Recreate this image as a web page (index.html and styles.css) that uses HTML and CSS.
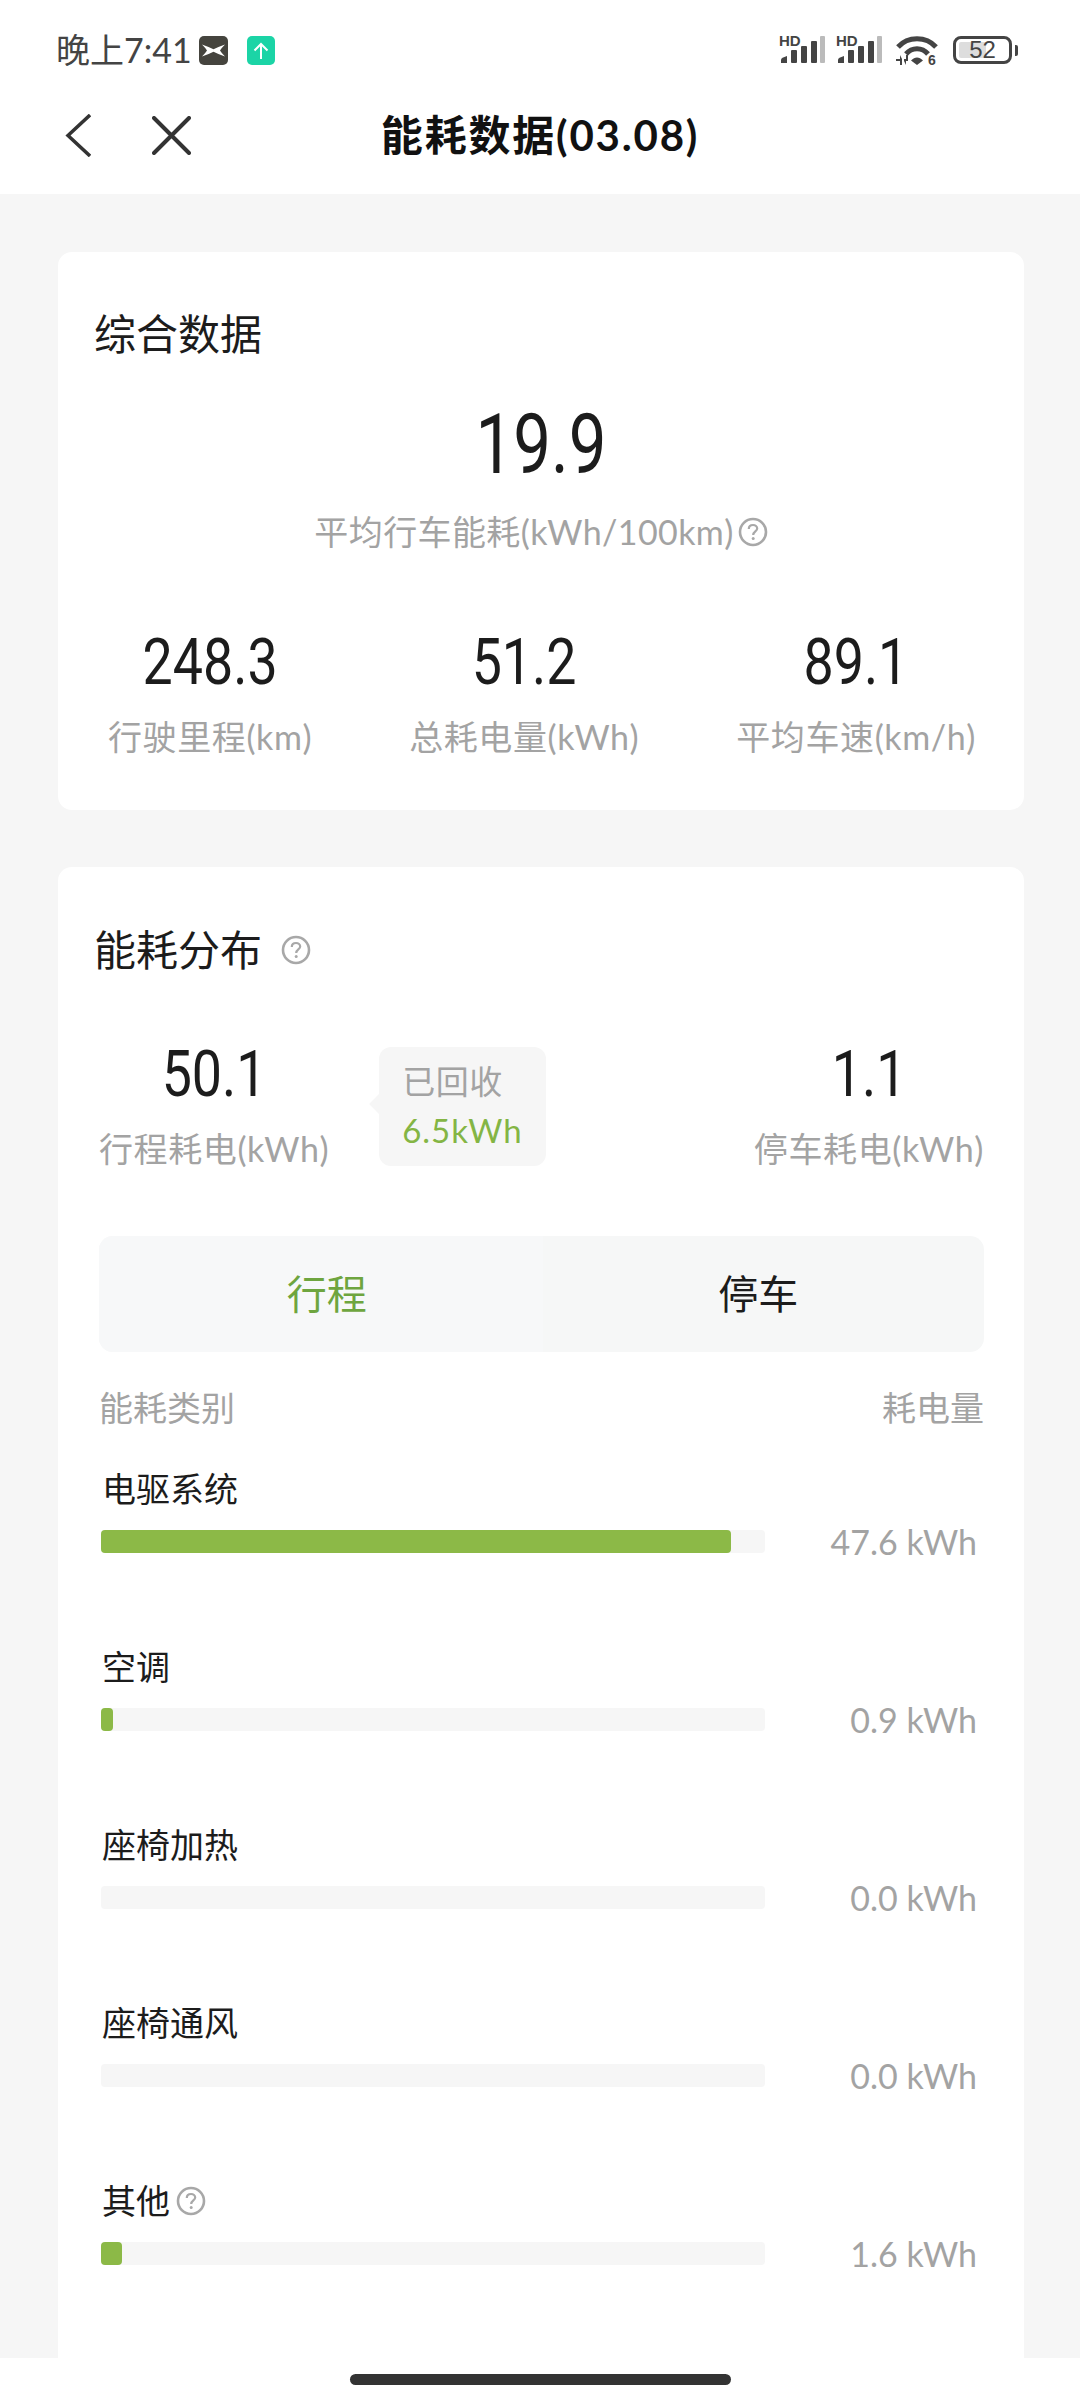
FILE: index.html
```html
<html>
	<head>
		<meta charset="utf-8">
		<title>能耗数据</title>
		<link rel="stylesheet" href="styles.css">
	</head>
	<body>
		<div class="page">
			<div class="header">
				<div class="status-bar">
					<div class="status-left">
						<span class="status-time">晚上7:41</span>
						<svg class="app-icon" viewBox="0 0 29 29">
							<rect width="29" height="29" rx="5" fill="#45443e"/>
							<path d="M3 8.5Q10 11 14.5 13.3Q19 11 26 8.5Q22.5 12 21 14.5Q22.5 17 26 20.5Q19 18 14.5 15.7Q10 18 3 20.5Q6.5 17 8 14.5Q6.5 12 3 8.5Z" fill="#fff"/>
						</svg>
						<svg class="app-icon second" viewBox="0 0 28 29">
							<rect width="28" height="29" rx="5" fill="#1bd4a6"/>
							<path d="M14 23V8M7.5 14.5L14 8L20.5 14.5" fill="none" stroke="#fff" stroke-width="2"/>
						</svg>
					</div>
					<div class="status-right">
						<div class="signal">
							<span class="signal-hd">HD</span>
							<svg viewBox="0 0 46 30" width="46" height="30"><use href="#bars"/></svg>
						</div>
						<div class="signal">
							<span class="signal-hd">HD</span>
							<svg viewBox="0 0 46 30" width="46" height="30"><use href="#bars"/></svg>
						</div>
						<svg class="wifi" viewBox="0 -4 44 40" width="44" height="40">
							<path d="M3 13C13 2 31 2 41 13" fill="none" stroke="#444" stroke-width="5"/>
							<path d="M11 20C17 13 27 13 33 20" fill="none" stroke="#444" stroke-width="5"/>
							<path d="M16 26.5C20 22.5 24 22.5 28 26.5L22 31Z" fill="#444"/>
							<path d="M1 25H5V21L7 25V31H5V27H1Z M9 25H11V21H13V27H11V31L9 27Z" fill="#444"/>
							<text x="33" y="31" class="wifi-six">6</text>
						</svg>
						<div class="battery">
							<div class="battery-body">
								<div class="battery-level"></div>
								<span class="battery-text">52</span>
							</div>
							<div class="battery-tip"></div>
						</div>
					</div>
				</div>
				<div class="nav-bar">
					<div class="nav-icons">
						<svg width="26" height="43" viewBox="0 0 26 43"><path d="M25 1L3 21.5L25 42" fill="none" stroke="#333" stroke-width="3.5"/></svg>
						<svg class="nav-close" width="39" height="39" viewBox="0 0 39 39"><path d="M2 2L37 37M37 2L2 37" fill="none" stroke="#333" stroke-width="4" stroke-linecap="round"/></svg>
					</div>
					<div class="nav-title">能耗数据(03.08)</div>
				</div>
			</div>

			<div class="content">
				<div class="card summary-card">
					<div class="card-title">综合数据</div>
					<div class="big-number">19.9</div>
					<div class="avg-label">
						<span>平均行车能耗(kWh/100km)</span>
						<svg class="help-icon" viewBox="0 0 30 30"><use href="#help"/></svg>
					</div>
					<div class="stats">
						<div class="stat">
							<div class="number">248.3</div>
							<div class="grey-label">行驶里程(km)</div>
						</div>
						<div class="stat">
							<div class="number">51.2</div>
							<div class="grey-label">总耗电量(kWh)</div>
						</div>
						<div class="stat">
							<div class="number">89.1</div>
							<div class="grey-label">平均车速(km/h)</div>
						</div>
					</div>
				</div>

				<div class="card dist-card">
					<div class="card-title title-row">
						<span>能耗分布</span>
						<svg class="help-icon" viewBox="0 0 30 30"><use href="#help"/></svg>
					</div>
					<div class="dist-body">
						<div class="use-row">
							<div class="stat">
								<div class="number">50.1</div>
								<div class="grey-label">行程耗电(kWh)</div>
							</div>
							<div class="recovered">
								<div class="recovered-label">已回收</div>
								<div class="recovered-value">6.5kWh</div>
							</div>
							<div class="stat stat-right">
								<div class="number">1.1</div>
								<div class="grey-label">停车耗电(kWh)</div>
							</div>
						</div>
						<div class="tabs">
							<div class="tab tab-active">行程</div>
							<div class="tab tab-other">停车</div>
						</div>
						<div class="list-head">
							<span>能耗类别</span>
							<span>耗电量</span>
						</div>
						<div class="usage-list">
							<div class="usage">
								<div class="usage-name">电驱系统</div>
								<div class="usage-line">
									<div class="bar"><div class="bar-fill" style="width: 630px"></div></div>
									<div class="usage-value">47.6 kWh</div>
								</div>
							</div>
							<div class="usage">
								<div class="usage-name">空调</div>
								<div class="usage-line">
									<div class="bar"><div class="bar-fill" style="width: 12px"></div></div>
									<div class="usage-value">0.9 kWh</div>
								</div>
							</div>
							<div class="usage">
								<div class="usage-name">座椅加热</div>
								<div class="usage-line">
									<div class="bar"></div>
									<div class="usage-value">0.0 kWh</div>
								</div>
							</div>
							<div class="usage">
								<div class="usage-name">座椅通风</div>
								<div class="usage-line">
									<div class="bar"></div>
									<div class="usage-value">0.0 kWh</div>
								</div>
							</div>
							<div class="usage">
								<div class="usage-name name-help">
									<span>其他</span>
									<svg class="help-icon" viewBox="0 0 30 30"><use href="#help"/></svg>
								</div>
								<div class="usage-line">
									<div class="bar"><div class="bar-fill" style="width: 21px"></div></div>
									<div class="usage-value">1.6 kWh</div>
								</div>
							</div>
						</div>
					</div>
				</div>
			</div>

			<div class="home-area">
				<div class="home-bar"></div>
			</div>
		</div>

		<svg width="0" height="0" class="defs">
			<symbol id="help" viewBox="0 0 30 30">
				<circle cx="15" cy="15" r="13" fill="none" stroke="#a8a8a8" stroke-width="2.6"/>
				<path d="M10.8 12C10.8 9.4 12.7 8 15 8C17.4 8 19.2 9.5 19.2 11.6C19.2 14.4 15.2 14.6 15.2 18" fill="none" stroke="#a8a8a8" stroke-width="2.2"/>
				<circle cx="15.2" cy="21.6" r="1.5" fill="#a8a8a8"/>
			</symbol>
			<symbol id="bars" viewBox="0 0 46 30">
				<path d="M2 28V25Q2 23.5 3.5 22.8L8 21V28Z" fill="#444"/>
				<rect x="12" y="15" width="6" height="13" rx="1" fill="#444"/>
				<rect x="22" y="11" width="6" height="17" rx="1" fill="#444"/>
				<rect x="32" y="6" width="6" height="22" rx="1" fill="#444"/>
				<rect x="41" y="1" width="5" height="27" rx="1" fill="#bbb"/>
			</symbol>
		</svg>
	</body>
</html>
```

FILE: styles.css
```css
* {
	box-sizing: border-box;
}

body {
	margin: 0;
	font-family: Lato, "Noto Sans CJK SC", sans-serif;
	color: #1c1c1c;
	background-color: #fff;
}

.defs {
	position: absolute;
}

.page {
	width: 1080px;
	height: 2400px;
	display: flex;
	flex-direction: column;
	overflow: hidden;
}

/* top part */

.header {
	height: 194px;
	background-color: #fff;
}

.status-bar {
	display: flex;
	justify-content: space-between;
	align-items: center;
	height: 40px;
	margin-top: 30px;
	padding: 0 62px 0 56px;
}

.status-left {
	display: flex;
	align-items: center;
}

.status-time {
	font-size: 34px;
	line-height: 40px;
	color: #444;
	width: 143px;
}

.app-icon {
	width: 29px;
	height: 29px;
}

.app-icon.second {
	width: 28px;
	margin-left: 19px;
}

.status-right {
	display: flex;
	align-items: center;
}

.signal {
	position: relative;
	width: 46px;
	height: 30px;
	margin-right: 11px;
}

.signal-hd {
	position: absolute;
	top: -2px;
	left: 0;
	font-family: "Liberation Sans", sans-serif;
	font-size: 15px;
	line-height: 15px;
	font-weight: bold;
	color: #444;
}

.wifi {
	margin: 0 14px 0 2px;
}

.wifi-six {
	font-family: "Liberation Sans", sans-serif;
	font-size: 14px;
	font-weight: bold;
	fill: #444;
}

.battery {
	display: flex;
	align-items: center;
	gap: 3px;
}

.battery-body {
	position: relative;
	display: flex;
	align-items: center;
	justify-content: center;
	width: 59px;
	height: 28px;
	border: 3px solid #444;
	border-radius: 8px;
}

.battery-level {
	position: absolute;
	left: 3px;
	top: 3px;
	bottom: 3px;
	width: 27px;
	background-color: #ddd;
	border-radius: 2px;
}

.battery-text {
	position: relative;
	font-family: "Liberation Sans", sans-serif;
	font-size: 24px;
	line-height: 22px;
	color: #444;
}

.battery-tip {
	width: 3px;
	height: 11px;
	background-color: #444;
	border-radius: 0 2px 2px 0;
}

.nav-bar {
	display: grid;
	grid-template-columns: 1fr auto 1fr;
	align-items: center;
	height: 54px;
	margin-top: 38px;
}

.nav-icons {
	display: flex;
	align-items: center;
	padding-left: 65px;
}

.nav-close {
	margin-left: 61px;
}

.nav-title {
	font-size: 42px;
	line-height: 54px;
	font-weight: bold;
	color: #111;
	letter-spacing: 1.8px;
}

/* cards */

.content {
	flex: 1;
	min-height: 0;
	overflow: hidden;
	display: flex;
	flex-direction: column;
	gap: 57px;
	padding: 58px 56px 0 58px;
	background-color: #f6f6f6;
}

.card {
	flex-shrink: 0;
	background-color: #fff;
	border-radius: 14px;
	padding: 54px 37px 51px;
}

.dist-card {
	padding-top: 55px;
	height: 1560px;
}

.card-title {
	font-size: 42px;
	line-height: 56px;
	margin-left: -1px;
}

.title-row {
	display: flex;
	align-items: center;
	gap: 19px;
}

.help-icon {
	width: 30px;
	height: 30px;
	flex-shrink: 0;
}

.big-number {
	margin-top: 38px;
	font-family: Roboto, sans-serif;
	font-size: 84px;
	line-height: 90px;
	text-align: center;
	transform: scaleX(0.8);
}

.avg-label {
	display: flex;
	justify-content: center;
	align-items: center;
	gap: 4px;
	margin-top: 20px;
	font-size: 34px;
	line-height: 44px;
	letter-spacing: 0.4px;
	color: #a3a3a3;
}

.stats {
	display: flex;
	justify-content: space-between;
	margin-top: 74px;
	padding: 0 11px 0 13px;
}

.stat {
	text-align: center;
}

.number {
	font-family: Roboto, sans-serif;
	font-size: 64px;
	line-height: 70px;
	transform: scaleX(0.84);
}

.grey-label {
	margin-top: 17px;
	font-size: 34px;
	line-height: 44px;
	letter-spacing: 0.6px;
	color: #a3a3a3;
}

.dist-body {
	padding: 0 3px 0 4px;
}

.use-row {
	display: flex;
	align-items: flex-start;
	margin-top: 62px;
}

.stat-right {
	margin-left: auto;
}

.recovered {
	position: relative;
	width: 167px;
	height: 119px;
	margin: 7px 0 0 50px;
	padding: 12px 0 0 23px;
	background-color: #f6f6f6;
	border-radius: 12px;
}

.recovered::before {
	content: "";
	position: absolute;
	left: -7px;
	top: 50px;
	width: 14px;
	height: 14px;
	background-color: #f6f6f6;
	transform: rotate(45deg);
}

.recovered-label {
	font-size: 33px;
	line-height: 44px;
	letter-spacing: 0.5px;
	color: #a3a3a3;
}

.recovered-value {
	margin-top: 5px;
	font-size: 33px;
	line-height: 44px;
	letter-spacing: 1px;
	color: #84b544;
}

.tabs {
	display: flex;
	height: 116px;
	margin-top: 65px;
	background-color: #f6f7f7;
	border-radius: 14px;
	overflow: hidden;
}

.tab {
	display: flex;
	align-items: center;
	justify-content: center;
	flex: 1;
	font-size: 40px;
	padding-bottom: 5px;
}

.tab-active {
	color: #6ea53f;
	background-color: #f7f8f9;
	padding-left: 12px;
}

.tab-other {
	padding-right: 10px;
}

.list-head {
	display: flex;
	justify-content: space-between;
	margin-top: 34px;
	font-size: 34px;
	line-height: 44px;
	color: #a3a3a3;
}

.usage-list {
	display: flex;
	flex-direction: column;
	gap: 92px;
	margin-top: 37px;
}

.usage-name {
	padding-left: 3px;
	font-size: 34px;
	line-height: 44px;
}

.name-help {
	display: flex;
	align-items: center;
	gap: 6px;
}

.usage-line {
	display: flex;
	align-items: center;
	height: 23px;
	margin-top: 19px;
	padding-left: 2px;
}

.bar {
	width: 664px;
	height: 23px;
	background-color: #f6f6f6;
	border-radius: 4px;
}

.bar-fill {
	height: 100%;
	background-color: #8cb947;
	border-radius: 4px;
}

.usage-value {
	flex: 1;
	padding-right: 7px;
	text-align: right;
	font-size: 34px;
	line-height: 23px;
	color: #a3a3a3;
}

/* bottom gesture bar */

.home-area {
	flex-shrink: 0;
	height: 42px;
	padding-top: 16px;
	background-color: #fff;
}

.home-bar {
	width: 381px;
	height: 11px;
	margin: 0 auto;
	background-color: #333;
	border-radius: 6px;
}
```
